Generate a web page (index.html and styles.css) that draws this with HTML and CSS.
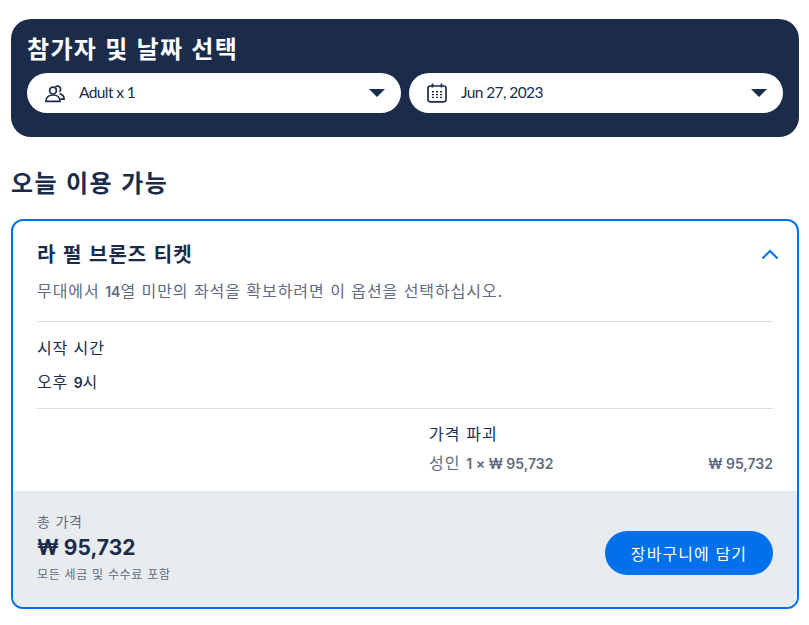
FILE: index.html
```html
<!DOCTYPE html>
<html lang="ko">
    <head>
        <meta charset="utf-8">
        <title>참가자 및 날짜 선택</title>
        <link rel="stylesheet" href="styles.css">
    </head>
    <body>
        <header class="picker">
            <h2>참가자 및 날짜 선택</h2>
            <div class="picker-row">
                <div class="pill">
                    <svg class="pill-icon" viewBox="0 0 20 20" fill="none" stroke="#1b2c4b" stroke-width="1.7">
                        <circle cx="8" cy="7.6" r="3.4"/>
                        <path d="M0.9 18.4c0-4 3-6.4 7.1-6.4s7.1 2.4 7.1 6.4z"/>
                        <path d="M10.4 3.9a3.2 3.2 0 1 1 4 5"/>
                        <path d="M14.6 10.8c2.9.5 4.5 2.5 4.5 5.4h-3.9"/>
                    </svg>
                    <span class="pill-label">Adult x 1</span>
                    <span class="caret"></span>
                </div>
                <div class="pill">
                    <svg class="pill-icon" viewBox="0 0 20 20" fill="none" stroke="#1b2c4b" stroke-width="1.7">
                        <rect x="1" y="3" width="18" height="15.8" rx="2.2"/>
                        <path d="M5.5 0.6v4M14.5 0.6v4"/>
                        <path d="M5 8.8h2M9 8.8h2M13 8.8h2M5 11.6h2M9 11.6h2M13 11.6h2M5 14.4h2M9 14.4h2M13 14.4h2" stroke-width="1.4"/>
                    </svg>
                    <span class="pill-label">Jun 27, 2023</span>
                    <span class="caret"></span>
                </div>
            </div>
        </header>

        <h2 class="section-title">오늘 이용 가능</h2>

        <div class="card">
            <div class="card-body">
                <div class="card-head">
                    <h3>라 펄 브론즈 티켓</h3>
                    <svg class="chevron" viewBox="0 0 18 11" fill="none" stroke="#0071eb" stroke-width="2">
                        <path d="M1.5 9.5L9 2l7.5 7.5"/>
                    </svg>
                </div>
                <p class="desc">무대에서 <span class="num">14</span>열 미만의 좌석을 확보하려면 이 옵션을 선택하십시오.</p>
                <div class="times">
                    <p>시작 시간</p>
                    <p class="time-value">오후 <span class="num">9</span>시</p>
                </div>
                <div class="prices">
                    <p>가격 파괴</p>
                    <div class="price-line">
                        <span>성인 <span class="num">1 × ₩ 95,732</span></span>
                        <span class="num">₩ 95,732</span>
                    </div>
                </div>
            </div>
            <div class="card-foot">
                <div>
                    <div class="total-label">총 가격</div>
                    <div class="total">₩ 95,732</div>
                    <div class="total-note">모든 세금 및 수수료 포함</div>
                </div>
                <div class="cart-btn">장바구니에 담기</div>
            </div>
        </div>
    </body>
</html>
```

FILE: styles.css
```css
html, body {
    margin: 0;
    background-color: #FFFFFF;
}

body {
    padding: 19px 10px 16px 11px;
    font-family: "Noto Sans CJK KR", sans-serif;
    color: #1b2c4b;
}

h2, h3, p {
    margin: 0;
}

.picker {
    background-color: #1b2c4b;
    border-radius: 20px;
    padding: 13px 16px 24px;
}

.picker h2 {
    color: #FFFFFF;
    font-size: 24px;
    line-height: 32px;
    font-weight: 700;
    letter-spacing: 1.3px;
    margin-bottom: 9px;
}

.picker-row {
    display: flex;
    gap: 8px;
}

.pill {
    flex: 1;
    height: 40px;
    background-color: #FFFFFF;
    border-radius: 20px;
    display: flex;
    align-items: center;
    padding: 0 16px 0 18px;
}

.pill-icon {
    width: 20px;
    height: 20px;
    margin-right: 14px;
}

.pill-label {
    flex: 1;
    font-family: "Lato", sans-serif;
    font-size: 15.5px;
    letter-spacing: -0.6px;
    padding-bottom: 3px;
}

.caret {
    border-left: 8px solid transparent;
    border-right: 8px solid transparent;
    border-top: 8px solid #1b2c4b;
}

.section-title {
    font-size: 24px;
    line-height: 32px;
    font-weight: 700;
    letter-spacing: 1.4px;
    margin: 29px 0 21px;
}

.card {
    border: 2px solid #0071eb;
    border-radius: 12px;
    overflow: hidden;
}

.card-body {
    padding: 18px 24px 17px;
}

.card-head {
    display: flex;
    justify-content: space-between;
    align-items: center;
    height: 30px;
}

.card-head h3 {
    font-size: 20px;
    line-height: 30px;
    font-weight: 700;
    letter-spacing: 1px;
}

.chevron {
    width: 18px;
    height: 11px;
    margin-right: -6px;
}

.desc {
    font-size: 16px;
    line-height: 24px;
    letter-spacing: 0.95px;
    color: #5f6b7e;
    margin-top: 9px;
    padding-bottom: 19px;
    border-bottom: 1px solid #dcdee1;
}

.num {
    font-family: "Inter", sans-serif;
    font-size: 14px;
    line-height: 1;
    font-weight: 600;
    letter-spacing: 0;
}

.times {
    padding: 13px 0 15px;
    border-bottom: 1px solid #dcdee1;
    font-size: 16px;
    line-height: 24px;
    letter-spacing: 0.9px;
}

.time-value {
    margin-top: 10px;
}

.prices {
    margin-left: 392px;
    padding-top: 12px;
    font-size: 16px;
    line-height: 24px;
    letter-spacing: 1.1px;
}

.price-line {
    display: flex;
    justify-content: space-between;
    align-items: baseline;
    margin-top: 5px;
    color: #5f6b7e;
}

.card-foot {
    background-color: #e9ecef;
    display: flex;
    justify-content: space-between;
    align-items: flex-start;
    padding: 19px 24px 23px;
}

.total-label {
    font-size: 14px;
    line-height: 22px;
    letter-spacing: 0.8px;
    color: #5f6b7e;
}

.total {
    font-family: "Inter", sans-serif;
    font-size: 21px;
    line-height: 30px;
    font-weight: 700;
    margin-top: 1px;
}

.total-note {
    font-size: 12px;
    line-height: 20px;
    letter-spacing: 0.7px;
    color: #5f6b7e;
    margin-top: 1px;
}

.cart-btn {
    width: 168px;
    height: 44px;
    line-height: 44px;
    margin-top: 21px;
    text-align: center;
    background-color: #0071eb;
    color: #FFFFFF;
    border-radius: 22px;
    font-size: 16px;
    letter-spacing: 1.1px;
}
```
